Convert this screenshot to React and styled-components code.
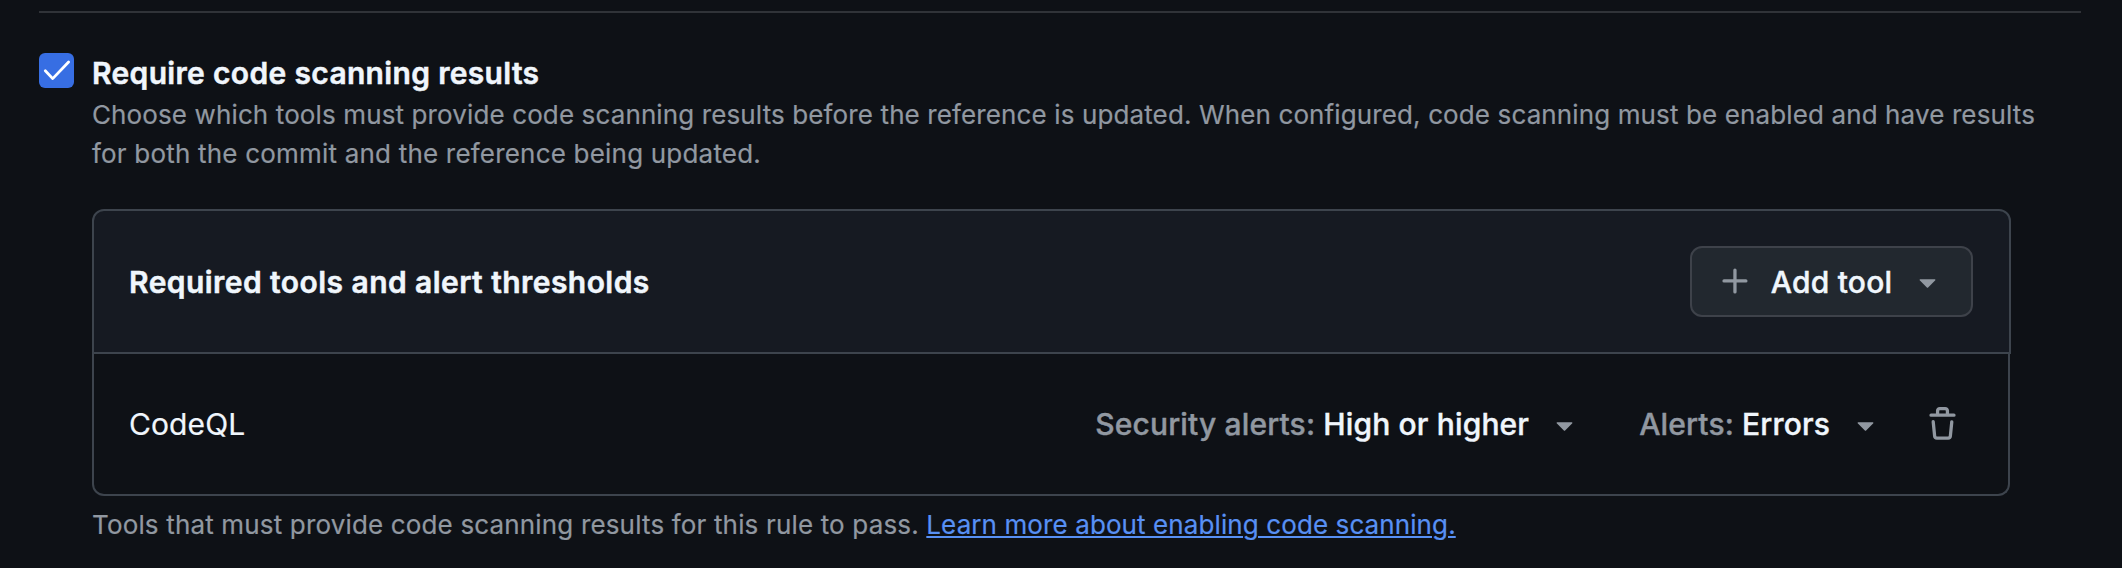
import React from "react";
import styled, { createGlobalStyle } from "styled-components";

const GlobalStyle = createGlobalStyle`
  * { box-sizing: border-box; }
  body {
    margin: 0;
    background: #0e1116;
    color: #f0f6fc;
    font-family: Inter, "Liberation Sans", sans-serif;
  }
`;

const Page = styled.main`
  height: 568px;
  padding: 11px 41px 0 39px;
  overflow: hidden;
`;

const Divider = styled.hr`
  margin: 0 0 39px;
  border: 0;
  height: 2px;
  background: #303338;
`;

const Rule = styled.section`
  display: flex;
  align-items: flex-start;
  gap: 18px;
`;

const Checkbox = styled.span`
  display: flex;
  flex: none;
  width: 35px;
  height: 35px;
  margin-top: 1px;
  border-radius: 6px;
  background: #376ee3;
`;

const RuleBody = styled.div`
  flex: 1;
  min-width: 0;
`;

const Title = styled.h3`
  margin: 0;
  font-size: 30px;
  font-weight: 600;
  line-height: 43px;
  letter-spacing: 0.33px;
  -webkit-text-stroke: 0.5px currentColor;
`;

const Note = styled.p`
  margin: 0;
  max-width: 1960px;
  color: #9198a1;
  font-size: 26px;
  line-height: 39px;
  letter-spacing: 0.16px;
  -webkit-text-stroke: 0.2px currentColor;
`;

const NoteLine = styled.span`
  display: block;
  white-space: nowrap;
  letter-spacing: ${(p) => p.$spacing}px;
`;

const Panel = styled.div`
  width: 1919px;
  margin: 36px 0 9px;
`;

const PanelHeader = styled.header`
  display: flex;
  align-items: center;
  justify-content: space-between;
  height: 145px;
  padding: 0 36px 0 35px;
  border: 2px solid #3d444d;
  border-radius: 12px 12px 0 0;
  background: #161a22;
`;

const PanelTitle = styled.h4`
  margin: 0;
  font-size: 30px;
  font-weight: 600;
  letter-spacing: 0.44px;
  -webkit-text-stroke: 0.5px currentColor;
`;

const AddButton = styled.button`
  display: flex;
  align-items: center;
  justify-content: space-between;
  width: 283px;
  height: 71px;
  padding: 0 26px;
  border: 2px solid #3e424a;
  border-radius: 12px;
  background: #22282f;
  color: #f0f6fc;
  font: 500 30px Inter, "Liberation Sans", sans-serif;
  letter-spacing: 0.2px;
  -webkit-text-stroke: 0.4px currentColor;
`;

const ToolRow = styled.div`
  display: flex;
  align-items: center;
  width: 1918px;
  height: 142px;
  padding: 0 48px 0 35px;
  border: 2px solid #3d444d;
  border-top: 0;
  border-radius: 0 0 12px 12px;
  font-size: 30px;
  letter-spacing: 0.1px;
`;

const ToolName = styled.span`
  flex: 1;
  -webkit-text-stroke: 0.2px currentColor;
`;

const Threshold = styled.div`
  display: flex;
  align-items: center;
  gap: 18px;
  margin-right: ${(p) => p.$after}px;
  font-weight: 500;
  letter-spacing: 0.15px;
  white-space: pre;
  -webkit-text-stroke: 0.4px currentColor;
`;

const ThresholdLabel = styled.span`
  color: #9198a1;
`;

const Icon = styled.svg`
  display: block;
  flex: none;
  width: 35px;
  height: 35px;
  fill: #9198a1;
`;

const Check = styled.svg`
  width: 35px;
  height: 35px;
  fill: none;
  stroke: #fff;
  stroke-width: 2.8;
  stroke-linecap: round;
  stroke-linejoin: round;
`;

const Link = styled.a`
  color: #5890f4;
  letter-spacing: 0.1px;
  text-decoration: underline;
  text-decoration-thickness: 2px;
  text-underline-offset: 2px;
`;

const Caret = () => (
  <Icon viewBox="0 0 16 16">
    <path d="m4.427 7.427 3.396 3.396a.25.25 0 0 0 .354 0l3.396-3.396A.25.25 0 0 0 11.396 7H4.604a.25.25 0 0 0-.177.427Z" />
  </Icon>
);

const Plus = () => (
  <Icon viewBox="0 0 16 16">
    <path d="M7.75 2a.75.75 0 0 1 .75.75V7h4.25a.75.75 0 0 1 0 1.5H8.5v4.25a.75.75 0 0 1-1.5 0V8.5H2.75a.75.75 0 0 1 0-1.5H7V2.75A.75.75 0 0 1 7.75 2Z" />
  </Icon>
);

const Trash = () => (
  <Icon viewBox="0 0 16 16">
    <path d="M11 1.75V3h2.25a.75.75 0 0 1 0 1.5H2.75a.75.75 0 0 1 0-1.5H5V1.75C5 .784 5.784 0 6.75 0h2.5C10.216 0 11 .784 11 1.75ZM4.496 6.675l.66 6.6a.25.25 0 0 0 .249.225h5.19a.25.25 0 0 0 .249-.225l.66-6.6a.75.75 0 0 1 1.492.149l-.66 6.6A1.748 1.748 0 0 1 10.595 15h-5.19a1.75 1.75 0 0 1-1.741-1.575l-.66-6.6a.75.75 0 1 1 1.492-.15ZM6.5 1.75V3h3V1.75a.25.25 0 0 0-.25-.25h-2.5a.25.25 0 0 0-.25.25Z" />
  </Icon>
);

const ThresholdSelect = ({ label, value, after }) => (
  <Threshold $after={after}>
    <span>
      <ThresholdLabel>{label}: </ThresholdLabel>
      {value}
    </span>
    <Caret />
  </Threshold>
);

export default function App() {
  return (
    <>
      <GlobalStyle />
      <Page>
        <Divider />
        <Rule>
          <Checkbox role="checkbox" aria-checked="true">
            <Check viewBox="0 0 35 35">
              <path d="M6.3 17.8 13.7 25.6 29.6 9" />
            </Check>
          </Checkbox>
          <RuleBody>
            <Title>Require code scanning results</Title>
            <Note>
              <NoteLine $spacing={0.12}>
                Choose which tools must provide code scanning results before the
                reference is updated. When configured, code scanning must be
                enabled and have results
              </NoteLine>
              <NoteLine $spacing={0.2}>
                for both the commit and the reference being updated.
              </NoteLine>
            </Note>
            <Panel>
              <PanelHeader>
                <PanelTitle>Required tools and alert thresholds</PanelTitle>
                <AddButton>
                  <Plus />
                  Add tool
                  <Caret />
                </AddButton>
              </PanelHeader>
              <ToolRow>
                <ToolName>CodeQL</ToolName>
                <ThresholdSelect label="Security alerts" value="High or higher" after={57} />
                <ThresholdSelect label="Alerts" value="Errors" after={42} />
                <Trash />
              </ToolRow>
            </Panel>
            <Note>
              Tools that must provide code scanning results for this rule to
              pass. <Link>Learn more about enabling code scanning.</Link>
            </Note>
          </RuleBody>
        </Rule>
      </Page>
    </>
  );
}
